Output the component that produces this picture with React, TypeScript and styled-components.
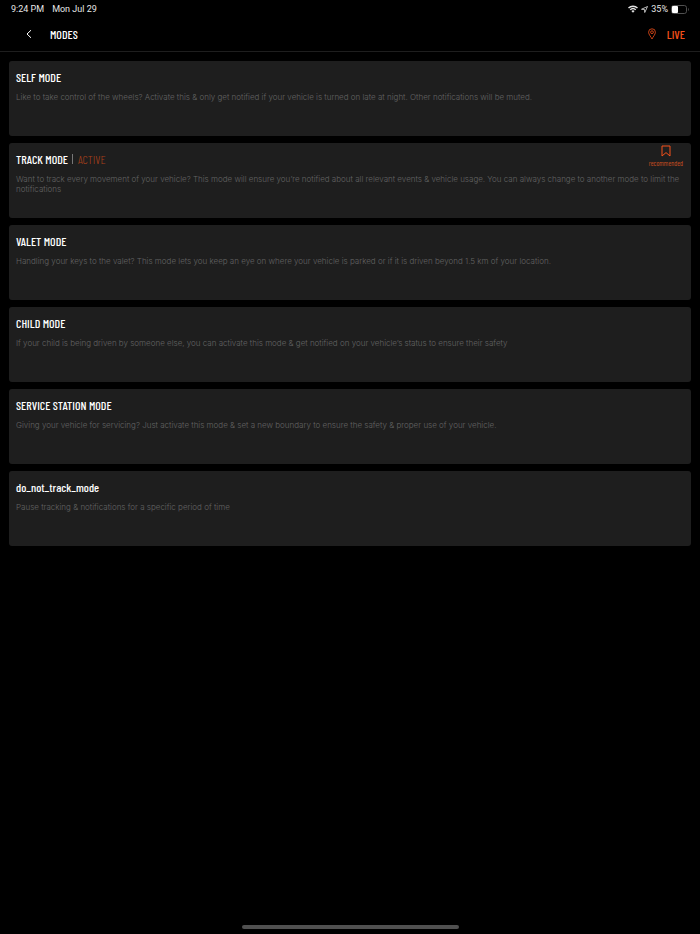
import React from "react";
import styled, { createGlobalStyle } from "styled-components";

const CONDENSED = '"Barlow Condensed", "Roboto Condensed", "Liberation Sans Narrow", "Liberation Sans", sans-serif';
const ORANGE = "#f4511a";

const GlobalStyle = createGlobalStyle`
  *, *::before, *::after { box-sizing: border-box; }
  body { margin: 0; background: #000; color: #fff; font-family: "Roboto", sans-serif; }
  h1, h2, p, ul { margin: 0; padding: 0; }
  button { font: inherit; color: inherit; background: none; border: 0; margin: 0; padding: 0; cursor: pointer; }
`;

const Screen = styled.div`
  display: flex;
  flex-direction: column;
  min-height: 100vh;
`;

const StatusBar = styled.div`
  display: flex;
  justify-content: space-between;
  align-items: center;
  height: 17px;
  padding: 1px 11px 0;
  font-size: 9px;
  line-height: 16px;
  color: #e6e6e6;
`;

const StatusGroup = styled.div<{ $gap: number }>`
  display: flex;
  align-items: center;
  gap: ${({ $gap }) => $gap}px;
`;

const Header = styled.header`
  display: flex;
  align-items: center;
  height: 34px;
  padding: 0 15px 0 25px;
  font-family: ${CONDENSED};
  font-weight: 500;
  line-height: 16px;
  box-shadow: 0 1px 0 #1e1e1e;
`;

const BackButton = styled.button`
  display: flex;
  width: 25px;
`;

const Title = styled.h1`
  font-size: 12px;
  font-weight: 500;
`;

const LiveButton = styled.button`
  display: flex;
  align-items: center;
  gap: 11px;
  margin-left: auto;
  font-size: 12px;
  font-weight: 500;
  color: ${ORANGE};
`;

const ModeList = styled.ul`
  display: flex;
  flex-direction: column;
  gap: 7px;
  padding: 10px 9px;
  list-style: none;
`;

const ModeCard = styled.li`
  position: relative;
  min-height: 75px;
  padding: 8px 7px;
  border-radius: 3px;
  background: #1e1e1e;
`;

const ModeHeading = styled.div`
  display: flex;
  align-items: center;
  font-family: ${CONDENSED};
  font-size: 12px;
  line-height: 16px;
`;

const ModeName = styled.h2`
  font-size: 12px;
  font-weight: 500;
`;

const Active = styled.span`
  display: flex;
  align-items: center;
  gap: 5px;
  margin-left: 4px;
  font-weight: 300;
  color: #a8401a;

  &::before {
    content: "";
    width: 1px;
    height: 10px;
    background: #777;
  }
`;

const Description = styled.p`
  margin-top: 7px;
  font-family: "Inter", sans-serif;
  font-size: 8px;
  font-weight: 300;
  line-height: 10px;
  color: #646464;
`;

const Recommended = styled.span`
  position: absolute;
  top: 2px;
  right: 8px;
  display: flex;
  flex-direction: column;
  align-items: center;
  gap: 2px;
  font-family: ${CONDENSED};
  font-size: 7px;
  line-height: 8px;
  color: #c44d20;
`;

const HomeIndicator = styled.div`
  width: 31%;
  height: 4px;
  margin: auto auto 5px;
  border-radius: 2px;
  background: #505050;
`;

const WifiIcon = () => (
  <svg width="10" height="8" viewBox="0 0 20 16" fill="none" stroke="#e6e6e6" strokeWidth="2.8" aria-hidden="true">
    <path d="M1 6a13 13 0 0 1 18 0M4.5 9.5a8 8 0 0 1 11 0" />
    <path d="M10 15.5 6.8 12.2a4.6 4.6 0 0 1 6.4 0Z" fill="#e6e6e6" stroke="none" />
  </svg>
);

const LocationIcon = () => (
  <svg width="7" height="7" viewBox="0 0 14 14" fill="none" stroke="#e6e6e6" strokeWidth="1.6" strokeLinejoin="round" aria-hidden="true">
    <path d="M13 1 1 6.5l6 .5.5 6Z" />
  </svg>
);

const BatteryIcon = () => (
  <svg width="18" height="9" viewBox="0 0 18 9" fill="none" aria-hidden="true">
    <rect x="0.5" y="0.5" width="15" height="8" rx="2.2" stroke="#505050" />
    <rect x="1" y="1" width="6" height="7" rx="1" fill="#fff" />
    <path d="M17 3v3c.9-.4.9-2.6 0-3Z" fill="#606060" />
  </svg>
);

const BackIcon = () => (
  <svg width="8" height="10" viewBox="0 0 8 10" fill="none" stroke="#fff" aria-hidden="true">
    <path d="M6 1.200 2 5l4 3.800" />
  </svg>
);

const PinIcon = () => (
  <svg width="8" height="12" viewBox="0 0 8 12" fill="none" stroke="currentColor" strokeWidth="0.8" aria-hidden="true">
    <path d="M4 11C3.2 9 .6 6.600.6 4.200a3.400 3.400 0 0 1 6.800 0C7.400 6.600 4.800 9 4 11Z" />
    <circle cx="4" cy="4.2" r="1.4" />
  </svg>
);

const BookmarkIcon = () => (
  <svg width="10" height="12" viewBox="0 0 10 12" fill="none" stroke={ORANGE} aria-hidden="true">
    <path d="M1 1h8v10L5 7.600 1 11Z" />
  </svg>
);

type Mode = { name: string; text: string; active?: boolean; recommended?: boolean };

const MODES: Mode[] = [
  {
    name: "SELF MODE",
    text: "Like to take control of the wheels? Activate this & only get notified if your vehicle is turned on late at night. Other notifications will be muted.",
  },
  {
    name: "TRACK MODE",
    text: "Want to track every movement of your vehicle? This mode will ensure you’re notified about all relevant events & vehicle usage. You can always change to another mode to limit the notifications",
    active: true,
    recommended: true,
  },
  {
    name: "VALET MODE",
    text: "Handling your keys to the valet? This mode lets you keep an eye on where your vehicle is parked or if it is driven beyond 1.5 km of your location.",
  },
  {
    name: "CHILD MODE",
    text: "If your child is being driven by someone else, you can activate this mode & get notified on your vehicle’s status to ensure their safety",
  },
  {
    name: "SERVICE STATION MODE",
    text: "Giving your vehicle for servicing? Just activate this mode & set a new boundary to ensure the safety & proper use of your vehicle.",
  },
  { name: "do_not_track_mode", text: "Pause tracking & notifications for a specific period of time" },
];

export default function App() {
  return (
    <Screen>
      <GlobalStyle />
      <StatusBar>
        <StatusGroup $gap={8}>
          <span>9:24 PM</span>
          <span>Mon Jul 29</span>
        </StatusGroup>
        <StatusGroup $gap={3}>
          <WifiIcon />
          <LocationIcon />
          <span>35%</span>
          <BatteryIcon />
        </StatusGroup>
      </StatusBar>
      <Header>
        <BackButton aria-label="Back">
          <BackIcon />
        </BackButton>
        <Title>MODES</Title>
        <LiveButton>
          <PinIcon />
          LIVE
        </LiveButton>
      </Header>
      <ModeList>
        {MODES.map((mode) => (
          <ModeCard key={mode.name}>
            <ModeHeading>
              <ModeName>{mode.name}</ModeName>
              {mode.active && <Active>ACTIVE</Active>}
            </ModeHeading>
            <Description>{mode.text}</Description>
            {mode.recommended && (
              <Recommended>
                <BookmarkIcon />
                recommended
              </Recommended>
            )}
          </ModeCard>
        ))}
      </ModeList>
      <HomeIndicator />
    </Screen>
  );
}
